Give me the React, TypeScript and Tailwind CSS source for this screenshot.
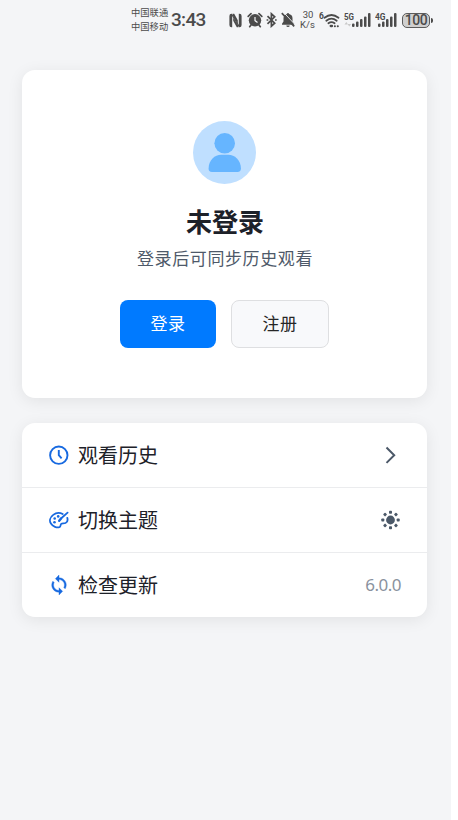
import React from "react";

function Signal5G() {
  return (
    <svg width="27" height="18" viewBox="0 0 27 18" fill="#4b4b4b" className="font-[Roboto,sans-serif]">
      <text x="0" y="8.5" fontSize="9" fontWeight="700" textLength="10" lengthAdjust="spacingAndGlyphs">5G</text>
      <path d="M.5 13.500l1.800-2.500 1.800 2.500zM3.500 13l1.800 2.500 1.800-2.500z" fill="#c9c9c9" />
      <rect x="8" y="12.500" width="2.500" height="3.500" rx="1.100" />
      <rect x="12" y="10.500" width="2.500" height="5.500" rx="1.100" />
      <rect x="16" y="8" width="2.500" height="8" rx="1.100" />
      <rect x="20" y="5.500" width="2.500" height="10.500" rx="1.100" />
      <rect x="24" y="2" width="2.500" height="14" rx="1.100" />
    </svg>
  );
}

function Signal4G() {
  return (
    <svg width="22" height="18" viewBox="0 0 22 18" fill="#4b4b4b" className="font-[Roboto,sans-serif]">
      <text x="0" y="8.5" fontSize="9" fontWeight="700" textLength="10.5" lengthAdjust="spacingAndGlyphs">4G</text>
      <rect x="3" y="12.500" width="2.500" height="3.500" rx="1.100" />
      <rect x="7" y="10.500" width="2.500" height="5.500" rx="1.100" />
      <rect x="11" y="8" width="2.500" height="8" rx="1.100" />
      <rect x="15" y="5.500" width="2.500" height="10.500" rx="1.100" />
      <rect x="19" y="2" width="2.500" height="14" rx="1.100" />
    </svg>
  );
}

function StatusIcons() {
  return (
    <>
      <svg className="ml-[24px]" width="13" height="15" viewBox="0 0 13 15">
        <path d="M3.200.8H2.500Q.4.800.4 3v9q0 2.200 2.100 2.200h.7zM9.800.8h.7q2.100 0 2.100 2.200v9q0 2.200-2.100 2.200h-.7z" fill="#4b4b4b" />
        <path d="M3.700.800h1.500l3.600 6.500v3.800L4 3zM9.300 14.200H7.800L4.200 7.700V4.800L9.300 12.500z" fill="#4b4b4b" />
        <path d="M2.800 1.500l7.400 12" stroke="#4b4b4b" strokeWidth="1.200" />
      </svg>
      <svg className="ml-[5px]" width="16" height="16" viewBox="0 0 16 16">
        <circle cx="8" cy="8.300" r="6.200" fill="#4b4b4b" />
        <path d="M1.200 4.300L4 1.700M14.800 4.300L12 1.700M4 13l-1.300 1.700M12 13l1.300 1.700" stroke="#4b4b4b" strokeWidth="1.700" strokeLinecap="round" />
        <path d="M8 5v3.600l2.500 1.800" fill="none" stroke="#f4f5f7" strokeWidth="1.200" />
      </svg>
      <svg className="ml-[3px]" width="11" height="16" viewBox="0 0 11 16" fill="none" stroke="#4b4b4b" strokeWidth="1.700">
        <path d="M1.500 4.200l7.200 7-3.300 3V1.800l3.300 3-7.200 7" />
        <path d="M.6 8h1.700M9 8h1.700" />
      </svg>
      <svg className="ml-[4px]" width="14" height="16" viewBox="0 0 14 16">
        <path d="M7 .9c1 0 1.200 1.100 1.200 1.100 2.300.6 3.300 2.200 3.300 4.200v3.300l1.700 2.300v1H1v-1l1.500-2.300V6.200c0-2 1-3.600 3.300-4.200 0 0 .2-1.100 1.200-1.100z" fill="#4b4b4b" />
        <path d="M5.300 13.600h3.400a1.700 1.500 0 01-3.400 0z" fill="#4b4b4b" />
        <path d="M2.400.200l12 12.800" stroke="#f4f5f7" strokeWidth="0.900" />
        <path d="M.8 1.200l12.400 13.200" stroke="#4b4b4b" strokeWidth="1.700" />
      </svg>
    </>
  );
}

function StatusBar() {
  return (
    <div className="flex h-[40px] items-center pl-[131px] text-[#4b4b4b]">
      <div className="w-[37px] pb-px text-[9.3px] leading-[13.5px] whitespace-nowrap">
        <div>中国联通</div>
        <div>中国移动</div>
      </div>
      <div className="ml-[3px] w-[34px] font-[Roboto,sans-serif] text-[19px] leading-[20px] font-medium tracking-[-0.700px]">3:43</div>
      <StatusIcons />
      <div className="ml-[5px] w-[16px] text-center font-[Roboto,sans-serif] text-[9.5px] leading-[10px] whitespace-nowrap">
        <div>30</div>
        <div className="-ml-[1px]">K/s</div>
      </div>
      <svg className="ml-[3px] font-[Roboto,sans-serif]" width="21" height="18" viewBox="0 0 21 18" fill="none" stroke="#4b4b4b" strokeWidth="1.800" strokeLinecap="round">
        <text x="0" y="7.5" fontSize="8.5" fontWeight="700" fill="#4b4b4b" stroke="none">6</text>
        <path d="M5.500 6.700q7-5.500 14 0M7.300 9.700q5.200-4.200 10.400 0M9.400 12.300q3.100-2.400 6.200 0" />
        <path d="M11.700 15h1.300" strokeWidth="2.300" />
        <path d="M15.800 15.200h.2M18.700 15.200h.2" strokeWidth="1.900" />
      </svg>
      <div className="ml-[4px] flex"><Signal5G /></div>
      <div className="ml-[4px] flex"><Signal4G /></div>
      <div className="ml-[5px] flex h-[15px] w-[28px] items-center justify-center rounded-[5px] border-[1.500px] border-[#5b5b5b] bg-[#cfcfcf] font-[Roboto,sans-serif] text-[14px] leading-[13px] font-medium tracking-[-0.500px]">100</div>
      <div className="ml-[1px] h-[5px] w-[2px] rounded-r bg-[#4b4b4b]" />
    </div>
  );
}

function ClockIcon() {
  return (
    <svg width="20" height="20" viewBox="0 0 20 20" fill="none" stroke="#1769e0" strokeWidth="1.900">
      <circle cx="9.800" cy="10.200" r="8.700" />
      <path d="M9.800 5V10.200l2.800 3.200" />
    </svg>
  );
}

function PaletteIcon() {
  return (
    <svg width="20" height="20" viewBox="0 0 20 20" fill="none" stroke="#1769e0" strokeWidth="1.800" strokeLinecap="round" strokeLinejoin="round">
      <path d="M13.700 4.100C11 2.500 7 2.700 4.200 4.900 1 7.300.1 10.900 1.900 13.600c2 3.200 6 4.200 8.500 3.600 1.500-.4.900-2.500 1.800-3.300 1-.9 2.600-.2 4.400-.9 2-.8 2.300-2.800 1.700-5.200" />
      <path d="M18.600 2.600l-6.600 5.900" strokeWidth="1.800" />
      <path d="M12 8.500l-1.800 2.200" strokeWidth="2.400" />
      <g fill="#1769e0" stroke="none">
        <circle cx="9.200" cy="6.400" r="1.300" />
        <circle cx="5.700" cy="8.500" r="1.300" />
        <circle cx="5.500" cy="12.200" r="1.300" />
      </g>
    </svg>
  );
}

function RefreshIcon() {
  return (
    <svg width="20" height="20" viewBox="1 1 22 22" fill="#1769e0" stroke="#1769e0" strokeWidth="0.400">
      <path d="M12 4V1L8 5l4 4V6c3.310 0 6 2.690 6 6 0 1.010-.25 1.970-.7 2.800l1.460 1.460C19.540 15.030 20 13.570 20 12c0-4.420-3.580-8-8-8zm0 14c-3.310 0-6-2.690-6-6 0-1.010.25-1.970.7-2.800L5.240 7.740C4.460 8.970 4 10.430 4 12c0 4.420 3.580 8 8 8v3l4-4-4-4v3z" />
    </svg>
  );
}

function SunIcon() {
  return (
    <svg width="20" height="20" viewBox="0 0 20 20" fill="#4b5868">
      <circle cx="9.500" cy="10" r="4.400" />
      {[0, 45, 90, 135, 180, 225, 270, 315].map((a) => (
        <rect key={a} x="8" y="0.800" width="3" height="3" rx="0.800" transform={`rotate(${a} 9.5 10)`} />
      ))}
    </svg>
  );
}

function Row({ icon, label, children }: { icon: React.ReactNode; label: string; children: React.ReactNode }) {
  return (
    <div className="flex h-[65px] items-center pr-[26px] pl-[27px]">
      {icon}
      <span className="ml-[9px] pb-[1px] text-[20px] leading-[28px] text-[#1d2129]">{label}</span>
      <span className="ml-auto flex items-center">{children}</span>
    </div>
  );
}

export default function App() {
  return (
    <div className="h-[820px] bg-white font-['Noto_Sans_CJK_SC',sans-serif]">
      <div className="h-full w-[451px] bg-[#f4f5f7]">
        <StatusBar />
        <main className="flex flex-col gap-[25px] pt-[30px] pr-[24px] pl-[22px]">
          <section className="flex h-[328px] flex-col items-center rounded-[13px] bg-white pt-[51px] shadow-[0_3px_16px_rgba(0,0,0,0.08)]">
            <svg width="63" height="63" viewBox="0 0 63 63">
              <circle cx="31.500" cy="31.500" r="31.500" fill="#bfdfff" />
              <circle cx="31.700" cy="22.300" r="10.300" fill="#66b5ff" />
              <path d="M15.600 47.500C15.600 39 22 33.800 28 33.800h7.500c6 0 12.400 5.200 12.400 13.700 0 2-1 3.500-3.500 3.500H19c-2.500 0-3.400-1.500-3.400-3.500z" fill="#66b5ff" />
            </svg>
            <h1 className="mt-[19px] ml-[1px] text-[26px] leading-[36px] font-bold text-[#1d2129]">未登录</h1>
            <p className="mt-[6px] ml-[1px] text-[17px] leading-[26px] tracking-[0.600px] text-[#4e5969]">登录后可同步历史观看</p>
            <div className="mt-[29px] flex gap-[15px] text-[17px] tracking-[0.500px]">
              <button className="h-[48px] w-[96px] rounded-[8px] bg-[#007aff] pb-[3px] text-white">登录</button>
              <button className="h-[48px] w-[98px] rounded-[8px] border border-[#dedfe1] bg-[#f8f9fb] pb-[3px] text-[#262626]">注册</button>
            </div>
          </section>
          <section className="h-[194px] divide-y divide-[#ebecee] rounded-[13px] bg-white shadow-[0_3px_16px_rgba(0,0,0,0.08)]">
            <Row icon={<ClockIcon />} label="观看历史">
              <svg className="mr-[3px]" width="14" height="20" viewBox="0 0 14 20" fill="none" stroke="#4b5868" strokeWidth="2">
                <path d="M2.500 2.500l7.700 7.700-7.700 7.700" />
              </svg>
            </Row>
            <Row icon={<PaletteIcon />} label="切换主题"><SunIcon /></Row>
            <div className="flex h-[64px] items-center pr-[26px] pl-[27px]">
              <RefreshIcon />
              <span className="ml-[9px] pb-[1px] text-[20px] leading-[28px] text-[#1d2129]">检查更新</span>
              <span className="ml-auto pb-[1px] font-['Noto_Sans',sans-serif] text-[17px] leading-[24px] tracking-[-0.500px] text-[#8a929e]">6.0.0</span>
            </div>
          </section>
        </main>
      </div>
    </div>
  );
}
